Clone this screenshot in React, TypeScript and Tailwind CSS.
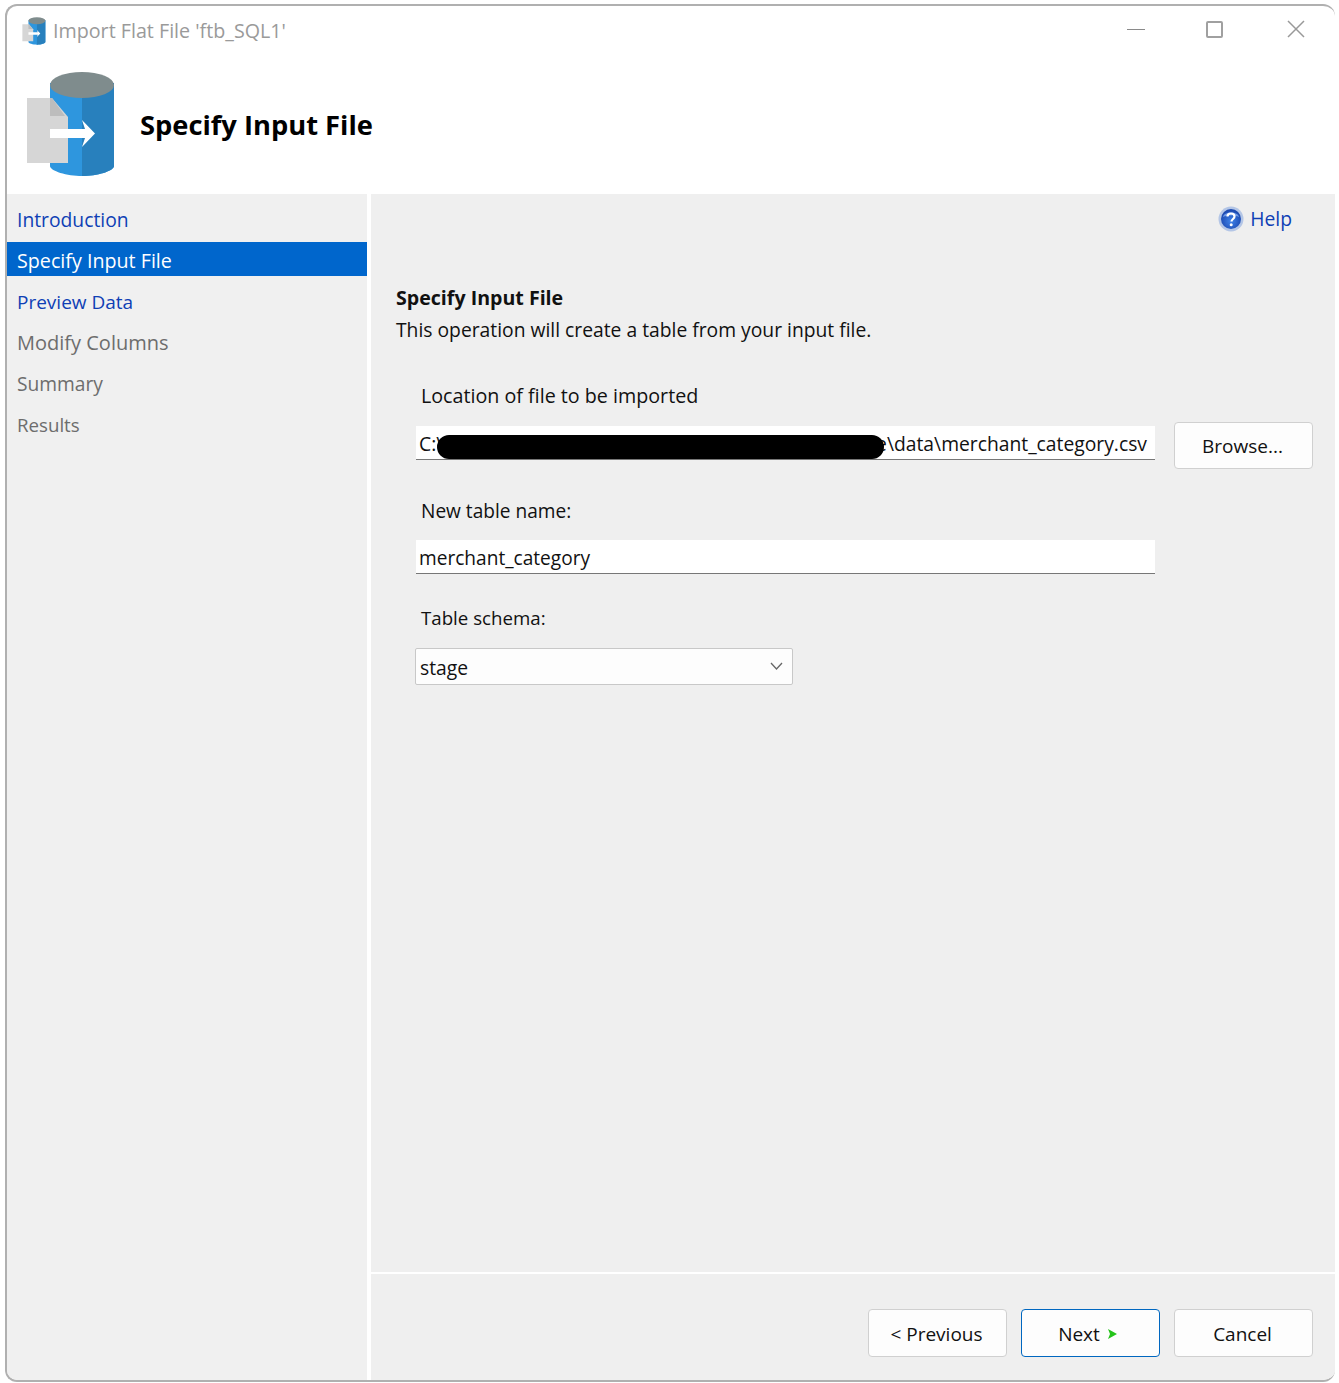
const font = "[font-family:'Open_Sans',sans-serif]";

function DbIcon({ className }: { className: string }) {
  return (
    <svg className={className} viewBox="0 0 88 106">
      <path d="M23 12H87V95C87 100 70 105 55 105C40 105 23 100 23 95Z" fill="#2e96de" />
      <path d="M55 12H87V95C87 100 70 105 55 105Z" fill="#2880bd" />
      <path d="M0 27H25L41 46V92H0Z" fill="#d6d6d6" />
      <path d="M23 27H25L38 45H23Z" fill="#bdbdbd" />
      <ellipse cx="55" cy="14" rx="32" ry="13" fill="#7f8c8d" />
      <path d="M23 58H58L55 49L68 62.5L55 76L58 67H23Z" fill="#fff" />
    </svg>
  );
}

function HelpIcon() {
  return (
    <svg className="h-[26px] w-[26px]" viewBox="0 0 26 26">
      <defs>
        <radialGradient id="helpBall" cx="50%" cy="60%" r="55%">
          <stop offset="0%" stopColor="#3f83ea" />
          <stop offset="100%" stopColor="#1c49b0" />
        </radialGradient>
      </defs>
      <circle cx="13" cy="13" r="12.5" fill="#b4c6e6" />
      <circle cx="13" cy="13" r="10" fill="url(#helpBall)" />
      <path d="M5 11C6 5 20 5 21 11C17 9 9 9 5 11Z" fill="#6f9ae8" />
      <path d="M9.5 10.5C9.5 6.5 16.5 6.5 16.5 10.5C16.5 13 13.5 13 13.5 15.5" fill="none" stroke="#fff" strokeWidth="2.2" />
      <circle cx="13.2" cy="18.7" r="1.5" fill="#fff" />
    </svg>
  );
}

function DialogButton({ label, focused, arrow, short }: { label: string; focused?: boolean; arrow?: boolean; short?: boolean }) {
  return (
    <button className={`flex w-[139px] items-center justify-center gap-2 rounded-[4px] border bg-[#fdfdfd] pt-[2px] text-[19px] text-[#111] ${short ? "h-[47px]" : "h-12"} ${focused ? "border-[#0067c0] pr-[6px]" : "border-[#d0d0d0] pr-[2px]"}`}>
      {label}
      {arrow && (
        <svg className="h-[10px] w-[9px]" viewBox="0 0 9 10">
          <path d="M0 0L9 5L0 10L2 5Z" fill="#25c41a" />
        </svg>
      )}
    </button>
  );
}

const steps = [
  { label: "Introduction", color: "text-[19.3px] text-[#0f3fb5]" },
  { label: "Specify Input File", color: "text-[19.7px] text-white bg-[#0066cc]" },
  { label: "Preview Data", color: "text-[19px] text-[#0f3fb5]" },
  { label: "Modify Columns", color: "text-[20px] text-[#6d6d6d]" },
  { label: "Summary", color: "text-[19.2px] text-[#6d6d6d]" },
  { label: "Results", color: "text-[18.7px] text-[#6d6d6d]" },
];

export default function App() {
  return (
    <div className={`h-[1383px] w-[1339px] bg-white pt-1 pr-1 pb-[1px] pl-[5px] ${font}`}>
      <div className="flex h-full flex-col overflow-hidden rounded-[12px] border-t-2 border-b-2 border-l-2 border-[#b0b0b0] border-r-0 bg-white">
        {/* title bar */}
        <div className="flex h-[50px] shrink-0 items-center pl-[14px] pr-[30px]">
          <DbIcon className="h-[28px] w-[26px]" />
          <span className="ml-[6px] text-[19.7px] text-[#9a9a9a]">Import Flat File 'ftb_SQL1'</span>
          <div className="mb-1 ml-auto flex items-center gap-[62px]">
            <div className="-mr-px h-[1px] w-[18px] bg-[#8a8a8a]" />
            <div className="mr-[2px] h-[17px] w-[17px] rounded-[2px] border-2 border-[#a0a0a0]" />
            <svg className="h-[18px] w-[18px]" viewBox="0 0 18 18">
              <path d="M1 1L17 17M17 1L1 17" stroke="#999" strokeWidth="1.5" />
            </svg>
          </div>
        </div>

        {/* header */}
        <div className="flex h-[138px] shrink-0 items-center pb-[2px] pl-5">
          <DbIcon className="h-[106px] w-[88px]" />
          <h1 className="mt-[2px] ml-[25px] text-[27.3px] font-bold text-black">Specify Input File</h1>
        </div>

        <div className="flex min-h-0 flex-1">
          {/* steps */}
          <div className="flex w-[360px] shrink-0 flex-col bg-[#f0f0f0]">
            {steps.map((step) => (
              <div key={step.label} className={`mt-[7px] flex h-[34px] items-center pt-1 pl-[10px] ${step.color}`}>
                {step.label}
              </div>
            ))}
          </div>

          <div className="w-1 shrink-0 bg-white" />

          {/* content */}
          <div className="flex min-w-0 flex-1 flex-col bg-[#efefef]">
            <div className="flex-1 pl-[25px] pr-[22px]">
              <div className="flex justify-end pr-[21px] pt-[11px]">
                <div className="flex items-center gap-[6px] text-[19.3px] text-[#0f3fb5]">
                  <HelpIcon />
                  Help
                </div>
              </div>

              <h2 className="mt-[51px] text-[19.6px] leading-[26px] font-bold text-[#111]">Specify Input File</h2>
              <p className="mt-[5px] text-[19.3px] leading-[28px] text-[#111]">This operation will create a table from your input file.</p>

              <div className="pl-5">
                <label className="mt-[38px] block pl-[5px] text-[19.7px] leading-[28px] text-[#111]">Location of file to be imported</label>
                <div className="mt-[12px] flex h-12 items-start gap-[19px]">
                  <div className="relative mt-1 flex h-[34px] w-[739px] items-center overflow-hidden border-b border-[#777] bg-white pt-1 pl-[3px] text-[19.3px] whitespace-nowrap text-[#111]">
                    C:\
                    <span className="absolute right-[8px]">e\data\merchant_category.csv</span>
                    <div className="absolute top-[9px] left-[21px] h-6 w-[447px] rounded-[12px] bg-black" />
                  </div>
                  <DialogButton label="Browse..." short />
                </div>

                <label className="mt-[27px] block pl-[5px] text-[19.1px] leading-[28px] text-[#111]">New table name:</label>
                <div className="mt-[15px] flex h-[34px] w-[739px] items-center border-b border-[#777] bg-white pt-1 pl-[3px] text-[19.1px] text-[#111]">merchant_category</div>

                <label className="mt-[30px] block pl-[5px] text-[18.7px] leading-[28px] text-[#111]">Table schema:</label>
                <div className="mt-[16px] -ml-px flex h-[37px] w-[378px] items-center justify-between rounded-[2px] border border-[#c8c8c8] bg-[#fdfdfd] pt-1 pr-[9px] pl-[4px] text-[19.3px] text-[#111]">
                  stage
                  <svg className="-mt-1 h-2 w-[13px]" viewBox="0 0 13 8">
                    <path d="M1 1L6.5 7L12 1" fill="none" stroke="#666" strokeWidth="1.3" />
                  </svg>
                </div>
              </div>
            </div>

            {/* footer */}
            <div className="flex h-[108px] shrink-0 justify-end gap-[14px] border-t-2 border-white pt-[35px] pr-[22px]">
              <DialogButton label="< Previous" />
              <DialogButton label="Next" focused arrow />
              <DialogButton label="Cancel" />
            </div>
          </div>
        </div>
      </div>
    </div>
  );
}
